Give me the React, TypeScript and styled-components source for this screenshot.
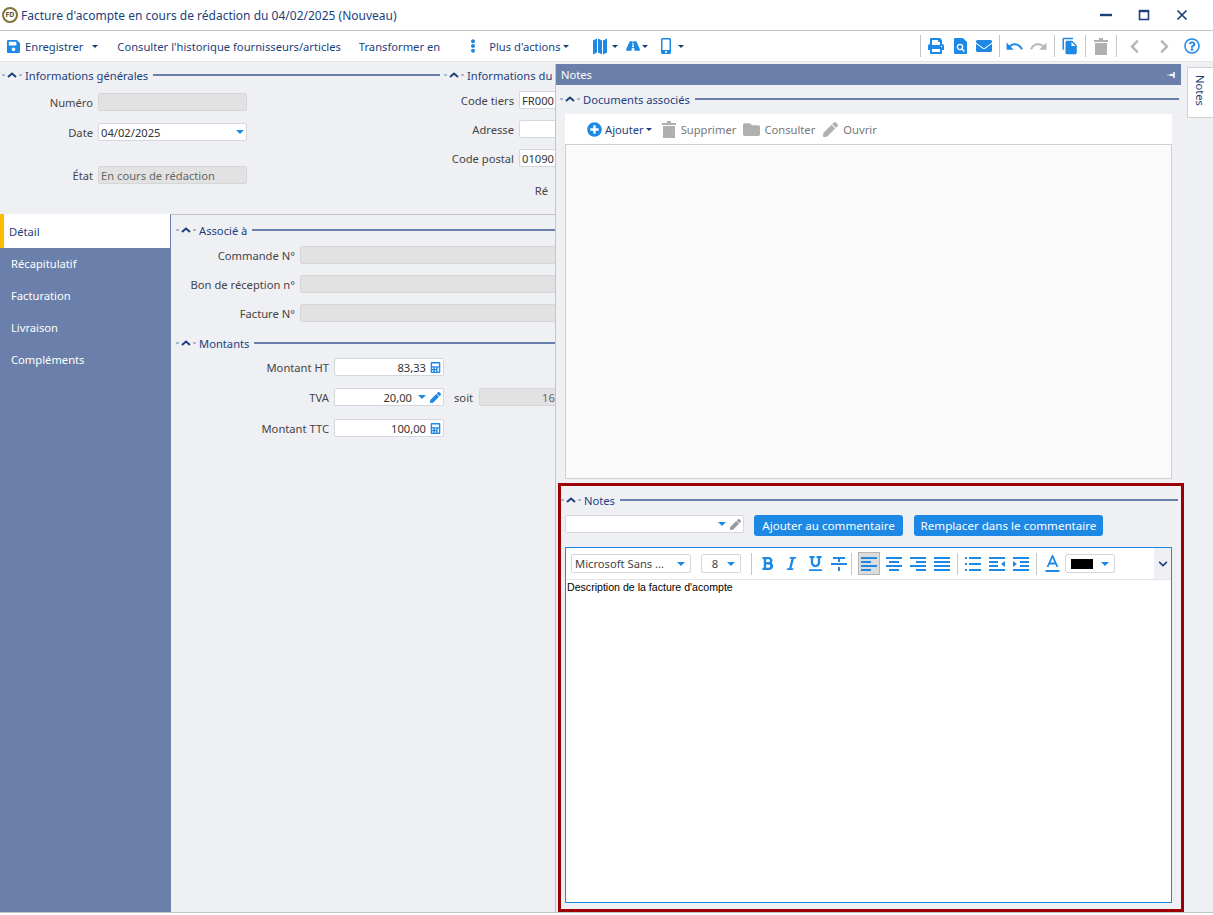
import React from 'react';
import styled, { createGlobalStyle } from 'styled-components';
import {
  FaBold,
  FaCalculator,
  FaChevronDown,
  FaChevronLeft,
  FaChevronRight,
  FaEllipsisV,
  FaEnvelope,
  FaFolder,
  FaItalic,
  FaMobileAlt,
  FaPen,
  FaPlusCircle,
  FaPrint,
  FaRegQuestionCircle,
  FaRoad,
  FaSave,
  FaUnderline,
} from 'react-icons/fa';
import { MdFileCopy, MdRedo, MdUndo } from 'react-icons/md';

const BLUE = '#1e88e5';
const SLATE = '#6a80aa';
const NAVY = '#1c3f7c';
const FONT = '"Noto Sans", "Liberation Sans", sans-serif';

const GlobalStyle = createGlobalStyle`
  html, body {
    margin: 0;
    padding: 0;
    background: #fff;
  }
  * { box-sizing: border-box; }
`;

const Page = styled.div`
  width: 1213px;
  height: 915px;
  padding-bottom: 2px;
  display: flex;
  flex-direction: column;
  overflow: hidden;
  font-family: ${FONT};
  font-size: 11.2px;
  color: #444;
`;

const TitleBar = styled.div`
  height: 31px;
  flex: none;
  display: flex;
  align-items: center;
  padding-left: 2px;
  background: #fff;
  border-bottom: 1px solid #c4c4c4;
  color: ${NAVY};
  font-size: 12px;
`;

const TitleLogo = styled.div`
  width: 16px;
  height: 16px;
  margin-right: 3px;
  border: 2px solid #7d7436;
  border-radius: 50%;
  color: #5d5628;
  font-size: 7px;
  font-weight: 700;
  line-height: 12px;
  text-align: center;
`;

const TitleText = styled.span`
  flex: 1;
`;

const WindowButton = styled.button`
  width: 38px;
  height: 30px;
  padding: 0;
  border: 0;
  background: none;
  display: flex;
  align-items: center;
  justify-content: center;
`;

const Toolbar = styled.div`
  height: 31px;
  flex: none;
  display: flex;
  align-items: center;
  padding: 0 6px;
  background: #fff;
  border-bottom: 1px solid #e3e5ea;
  color: ${NAVY};
`;

const ToolText = styled.span<{ $left?: number; $dark?: boolean }>`
  margin-left: ${(p) => p.$left ?? 0}px;
  white-space: nowrap;
  color: ${(p) => (p.$dark ? NAVY : 'inherit')};
`;

const Caret = styled.i<{ $color?: string; $left?: number; $size?: number }>`
  display: inline-block;
  flex: none;
  width: 0;
  height: 0;
  margin-left: ${(p) => p.$left ?? 2}px;
  border-left: ${(p) => p.$size ?? 3}px solid transparent;
  border-right: ${(p) => p.$size ?? 3}px solid transparent;
  border-top: ${(p) => p.$size ?? 3}px solid ${(p) => p.$color ?? NAVY};
`;

const ToolIcon = styled.span<{ $left?: number; $color?: string; $size?: number }>`
  display: inline-flex;
  flex: none;
  margin-left: ${(p) => p.$left ?? 0}px;
  color: ${(p) => p.$color ?? BLUE};
  font-size: ${(p) => p.$size ?? 15}px;
`;

const ToolDivider = styled.span<{ $left?: number }>`
  flex: none;
  width: 1px;
  height: 22px;
  margin-left: ${(p) => p.$left ?? 6}px;
  background: #c8c8c8;
`;

const Body = styled.div`
  flex: 1;
  min-height: 0;
  display: flex;
  background: #eff0f4;
  border-bottom: 1px solid #c4c4c4;
`;

const LeftPane = styled.div`
  width: 555px;
  flex: none;
  display: flex;
  flex-direction: column;
  overflow: hidden;
`;

const TopForm = styled.div`
  height: 152px;
  flex: none;
  display: flex;
`;

const FormColumn = styled.div<{ $width: number }>`
  width: ${(p) => p.$width}px;
  flex: none;
  padding-right: 2px;
`;

const SectionHeader = styled.div<{ $height?: number; $indent?: number; $top?: number; $right?: number }>`
  height: ${(p) => p.$height ?? 26}px;
  margin-top: ${(p) => p.$top ?? 0}px;
  margin-right: ${(p) => p.$right ?? 0}px;
  display: flex;
  align-items: center;
  padding-left: ${(p) => p.$indent ?? 2}px;
  color: ${NAVY};
  white-space: nowrap;

  &::after {
    content: '';
    flex: 1;
    height: 2px;
    margin-left: 5px;
    background: ${SLATE};
  }
`;

const Collapse = styled.span`
  display: inline-flex;
  align-items: center;
  width: 23px;
  flex: none;
`;

const Row = styled.div<{ $labelWidth: number; $top: number }>`
  display: flex;
  align-items: center;
  height: 18px;
  margin-top: ${(p) => p.$top}px;

  & > label {
    width: ${(p) => p.$labelWidth}px;
    flex: none;
    margin-right: 5px;
    text-align: right;
    white-space: nowrap;
  }
`;

const Field = styled.div<{ $width?: number; $disabled?: boolean; $right?: boolean; $pad?: number }>`
  width: ${(p) => (p.$width ? `${p.$width}px` : 'auto')};
  flex: ${(p) => (p.$width ? 'none' : 1)};
  height: 18px;
  display: flex;
  align-items: center;
  justify-content: ${(p) => (p.$right ? 'flex-end' : 'flex-start')};
  gap: 4px;
  padding: 0 ${(p) => (p.$pad ? 0 : 2)}px 0 ${(p) => p.$pad ?? 2}px;
  overflow: hidden;
  white-space: nowrap;
  border: 1px solid ${(p) => (p.$disabled ? '#d6d6d6' : '#d4d7de')};
  border-radius: 2px;
  background: ${(p) => (p.$disabled ? '#e2e2e2' : '#fff')};
  color: ${(p) => (p.$disabled ? '#666' : '#333')};
`;

const Spacer = styled.span`
  flex: 1;
`;

const TabsArea = styled.div`
  flex: 1;
  min-height: 0;
  display: flex;
`;

const SideNav = styled.nav`
  width: 170px;
  flex: none;
  background: ${SLATE};
`;

const NavItem = styled.div<{ $active?: boolean }>`
  height: ${(p) => (p.$active ? 34 : 32)}px;
  display: flex;
  align-items: center;
  padding-left: ${(p) => (p.$active ? 5 : 11)}px;
  margin-bottom: ${(p) => (p.$active ? -1 : 0)}px;
  border-left: ${(p) => (p.$active ? '4px solid #ffb900' : '0')};
  background: ${(p) => (p.$active ? '#fff' : 'transparent')};
  color: ${(p) => (p.$active ? NAVY : '#fff')};
`;

const DetailPane = styled.div`
  flex: 1;
  padding-right: 2px;
  border-left: 1px solid ${SLATE};
  border-top: 1px solid #c4c4c4;
`;

const NotesPanel = styled.div`
  width: 626px;
  flex: none;
  margin-top: 2px;
  display: flex;
  flex-direction: column;
  border-left: 1px solid #c4c4c4;
`;

const PanelHeader = styled.div`
  height: 21px;
  flex: none;
  display: flex;
  align-items: center;
  justify-content: space-between;
  padding: 0 5px;
  background: ${SLATE};
  color: #fff;
`;

const DocumentsSection = styled.div`
  height: 398px;
  flex: none;
  display: flex;
  flex-direction: column;
  padding: 0 2px 4px 2px;
`;

const DocToolbar = styled.div`
  height: 30px;
  flex: none;
  display: flex;
  align-items: center;
  margin: 1px 7px 0 7px;
  padding-left: 22px;
  background: #fff;
  color: #777;
`;

const DocList = styled.div`
  flex: 1;
  margin: 0 7px;
  background: #fafafa;
  border: 1px solid #d0d0d0;
`;

const NotesSection = styled.section`
  flex: 1;
  min-height: 0;
  margin: 0 -3px 0 2px;
  padding: 0 0 6px 0;
  display: flex;
  flex-direction: column;
  border: 3px solid #9c0006;
`;

const TemplateRow = styled.div`
  flex: none;
  display: flex;
  align-items: flex-start;
  margin: 1px 0 0 4px;
  height: 32px;
`;

const PrimaryButton = styled.button<{ $width: number; $left: number }>`
  width: ${(p) => p.$width}px;
  height: 21px;
  margin-left: ${(p) => p.$left}px;
  padding: 0;
  border: 0;
  border-radius: 3px;
  background: ${BLUE};
  color: #fff;
  font: inherit;
  font-size: 11.6px;
`;

const Editor = styled.div`
  flex: 1;
  min-height: 0;
  display: flex;
  flex-direction: column;
  margin: 0 9px 0 4px;
  border: 1px solid ${BLUE};
  background: #fff;
`;

const EditorToolbar = styled.div`
  height: 31px;
  flex: none;
  display: flex;
  align-items: center;
  padding-left: 5px;
  background: #fff;
`;

const Select = styled.div<{ $width: number; $left?: number }>`
  width: ${(p) => p.$width}px;
  height: 19px;
  flex: none;
  margin-left: ${(p) => p.$left ?? 0}px;
  display: flex;
  align-items: center;
  justify-content: space-between;
  padding: 0 5px 0 3px;
  border: 1px solid #d4d7de;
  border-radius: 2px;
  color: #444;
  white-space: nowrap;
`;

const FormatButton = styled.span<{ $active?: boolean; $left?: number }>`
  width: 22px;
  height: 23px;
  flex: none;
  margin-left: ${(p) => p.$left ?? 2}px;
  display: flex;
  align-items: center;
  justify-content: center;
  color: ${BLUE};
  font-size: 15px;
  background: ${(p) => (p.$active ? '#dcdcdc' : 'transparent')};
  border: 1px solid ${(p) => (p.$active ? '#b5b5b5' : 'transparent')};
`;

const MoreButton = styled.span`
  align-self: stretch;
  width: 17px;
  margin-left: auto;
  display: flex;
  align-items: center;
  justify-content: center;
  background: #eff0f4;
  color: ${NAVY};
  font-size: 10px;
`;

const EditorText = styled.div`
  flex: 1;
  padding: 0 1px;
  border-top: 1px solid #e3e5ea;
  font-family: "Liberation Sans", sans-serif;
  font-size: 10.6px;
  line-height: 14px;
  color: #000;
`;

const ColorSwatch = styled.span`
  width: 22px;
  height: 10px;
  margin-left: 2px;
  background: #000;
`;

const SideStrip = styled.div`
  flex: 1;
  padding: 5px 0 0 6px;
`;

const NotesTab = styled.div`
  width: 26px;
  height: 51px;
  display: flex;
  align-items: center;
  padding-top: 7px;
  background: #fff;
  border: 1px solid #d0d0d0;
  border-right: 0;
  color: ${NAVY};
  writing-mode: vertical-rl;
`;

const CollapseIcon = () => (
  <Collapse>
    <svg width="20" height="8" viewBox="0 0 20 8">
      <path d="M0 4h3M17 4h3" stroke={SLATE} strokeWidth="1" />
      <path d="M6 6l4-3.5L14 6" fill="none" stroke={NAVY} strokeWidth="2" />
    </svg>
  </Collapse>
);

const Section: React.FC<{ title: string; height?: number; indent?: number; top?: number; right?: number }> = ({
  title,
  height,
  indent,
  top,
  right,
}) => (
  <SectionHeader $height={height} $indent={indent} $top={top} $right={right}>
    <CollapseIcon />
    {title}
  </SectionHeader>
);

const MapIcon = () => (
  <svg width="14" height="17" viewBox="0 0 14 17">
    <path d="M0 2.5L4 0.5v14l-4 2zM5 0.5l4 2v14l-4-2zM10 2.5l4-2v14l-4 2z" fill={BLUE} />
  </svg>
);

const TrashIcon: React.FC<{ left: number }> = ({ left }) => (
  <ToolIcon $left={left}>
    <svg width="14" height="17" viewBox="0 0 14 17">
      <path d="M0 2h5V0h4v2h5v2H0zM1 5h12v12H1z" fill="#b0b0b0" />
    </svg>
  </ToolIcon>
);

const Lines: React.FC<{ starts: number[]; ends: number[] }> = ({ starts, ends }) => (
  <svg width="16" height="14" viewBox="0 0 16 14">
    {starts.map((start, i) => (
      <rect key={i} x={start} y={i * 4} width={ends[i] - start} height="2" fill={BLUE} />
    ))}
  </svg>
);

const StrikeIcon = () => (
  <svg width="16" height="14" viewBox="0 0 16 14">
    <path d="M2 0h12v2H9v3H7V2H2zM0 6h16v2H0zM7 10h2v4H7z" fill={BLUE} />
  </svg>
);

const ListIcon = () => (
  <svg width="16" height="14" viewBox="0 0 16 14">
    <path d="M0 0h2v2H0zM4 0h12v2H4zM0 6h2v2H0zM4 6h12v2H4zM0 12h2v2H0zM4 12h12v2H4z" fill={BLUE} />
  </svg>
);

const IndentIcon: React.FC<{ flip?: boolean }> = ({ flip }) => (
  <svg width="16" height="14" viewBox="0 0 16 14" style={flip ? { transform: 'scaleX(-1)' } : undefined}>
    <path d="M0 0h16v2H0zM7 4h9v2H7zM7 8h9v2H7zM0 12h16v2H0zM0 4l4 3-4 3z" fill={BLUE} />
  </svg>
);

const navItems = ['Récapitulatif', 'Facturation', 'Livraison', 'Compléments'];

const App: React.FC = () => (
  <Page>
    <GlobalStyle />
    <TitleBar>
      <TitleLogo>FD</TitleLogo>
      <TitleText>Facture d'acompte en cours de rédaction du 04/02/2025 (Nouveau)</TitleText>
      <WindowButton>
        <svg width="12" height="12" viewBox="0 0 12 12"><path d="M0 6h12" stroke={NAVY} strokeWidth="2.4" /></svg>
      </WindowButton>
      <WindowButton>
        <svg width="12" height="12" viewBox="0 0 12 12"><path d="M1.5 2h9v8.5h-9z" fill="none" stroke={NAVY} strokeWidth="1.6" /><path d="M1 2h10" stroke={NAVY} strokeWidth="2.4" /></svg>
      </WindowButton>
      <WindowButton>
        <svg width="12" height="12" viewBox="0 0 12 12"><path d="M1.5 1.5l9 9M10.5 1.5l-9 9" stroke={NAVY} strokeWidth="1.7" /></svg>
      </WindowButton>
      <ToolText $left={12} />
    </TitleBar>

    <Toolbar>
      <ToolIcon><FaSave /></ToolIcon>
      <ToolText $left={4}>Enregistrer</ToolText>
      <Caret $left={9} />
      <ToolText $left={19}>Consulter l'historique fournisseurs/articles</ToolText>
      <ToolText $left={18}>Transformer en</ToolText>
      <ToolIcon $left={26} $size={14}><FaEllipsisV /></ToolIcon>
      <ToolText $left={9}>Plus d'actions</ToolText>
      <Caret />
      <ToolIcon $left={24}><MapIcon /></ToolIcon>
      <Caret $left={5} />
      <ToolIcon $left={8} $size={14}><FaRoad /></ToolIcon>
      <Caret />
      <ToolIcon $left={10} $size={16}><FaMobileAlt /></ToolIcon>
      <Caret $left={4} />
      <ToolDivider $left={236} />
      <ToolIcon $left={7} $size={16}><FaPrint /></ToolIcon>
      <ToolIcon $left={10}>
        <svg width="13" height="16" viewBox="0 0 13 16">
          <path d="M1 0h8l4 4v11a1 1 0 0 1-1 1H1a1 1 0 0 1-1-1V1a1 1 0 0 1 1-1z" fill={BLUE} />
          <circle cx="6" cy="9" r="2.6" fill="none" stroke="#fff" strokeWidth="1.3" />
          <path d="M8 11l2.4 2.4" stroke="#fff" strokeWidth="1.4" />
        </svg>
      </ToolIcon>
      <ToolIcon $left={9} $size={16}><FaEnvelope /></ToolIcon>
      <ToolDivider $left={7} />
      <ToolIcon $left={5} $size={19}><MdUndo /></ToolIcon>
      <ToolIcon $left={5} $size={19} $color="#b5b5b5"><MdRedo /></ToolIcon>
      <ToolDivider $left={6} />
      <ToolIcon $left={6} $size={18}><MdFileCopy /></ToolIcon>
      <ToolDivider $left={6} />
      <TrashIcon left={8} />
      <ToolDivider $left={8} />
      <ToolIcon $left={10} $size={15} $color="#b5b5b5"><FaChevronLeft /></ToolIcon>
      <ToolIcon $left={15} $size={15} $color="#b5b5b5"><FaChevronRight /></ToolIcon>
      <ToolIcon $left={12} $size={16}><FaRegQuestionCircle /></ToolIcon>
      <ToolIcon $left={13} $size={12} $color="#222"><FaEllipsisV /></ToolIcon>
    </Toolbar>

    <Body>
      <LeftPane>
        <TopForm>
          <FormColumn $width={442}>
            <Section title="Informations générales" />
            <Row $labelWidth={93} $top={5}>
              <label>Numéro</label>
              <Field $width={149} $disabled />
            </Row>
            <Row $labelWidth={93} $top={12}>
              <label>Date</label>
              <Field $width={149}>
                04/02/2025
                <Spacer />
                <Caret $color={BLUE} $size={4} />
              </Field>
            </Row>
            <Row $labelWidth={93} $top={25}>
              <label>État</label>
              <Field $width={149} $disabled>En cours de rédaction</Field>
            </Row>
          </FormColumn>
          <FormColumn $width={113}>
            <Section title="Informations du" />
            <Row $labelWidth={72} $top={3}>
              <label>Code tiers</label>
              <Field $width={120}>FR000</Field>
            </Row>
            <Row $labelWidth={72} $top={11}>
              <label>Adresse</label>
              <Field $width={120} />
            </Row>
            <Row $labelWidth={72} $top={11}>
              <label>Code postal</label>
              <Field $width={120}>01090</Field>
            </Row>
            <Row $labelWidth={106} $top={14}>
              <label>Ré</label>
            </Row>
          </FormColumn>
        </TopForm>

        <TabsArea>
          <SideNav>
            <NavItem $active>Détail</NavItem>
            {navItems.map((item) => (
              <NavItem key={item}>{item}</NavItem>
            ))}
          </SideNav>
          <DetailPane>
            <Section title="Associé à" height={30} indent={5} />
            <Row $labelWidth={124} $top={1}>
              <label>Commande N°</label>
              <Field $disabled />
            </Row>
            <Row $labelWidth={124} $top={11}>
              <label>Bon de réception n°</label>
              <Field $disabled />
            </Row>
            <Row $labelWidth={124} $top={11}>
              <label>Facture N°</label>
              <Field $disabled />
            </Row>
            <Section title="Montants" height={32} indent={5} top={5} />
            <Row $labelWidth={158} $top={-1}>
              <label>Montant HT</label>
              <Field $width={110} $right>
                83,33
                <ToolIcon $size={11}><FaCalculator /></ToolIcon>
              </Field>
            </Row>
            <Row $labelWidth={158} $top={12}>
              <label>TVA</label>
              <Field $width={110} $right>
                20,00
                <Caret $color={BLUE} $size={4} />
                <ToolIcon $size={11}><FaPen /></ToolIcon>
              </Field>
              <ToolText $left={10}>soit</ToolText>
              <ToolText $left={6} />
              <Field $disabled $pad={62}>16</Field>
            </Row>
            <Row $labelWidth={158} $top={13}>
              <label>Montant TTC</label>
              <Field $width={110} $right>
                100,00
                <ToolIcon $size={11}><FaCalculator /></ToolIcon>
              </Field>
            </Row>
          </DetailPane>
        </TabsArea>
      </LeftPane>

      <NotesPanel>
        <PanelHeader>
          Notes
          <svg width="9" height="8" viewBox="0 0 9 8">
            <path d="M0 4h3M3 3.3h3.5v-2h1v5.400h-1v-2H3z" fill="#fff" stroke="#fff" strokeWidth="0.6" />
          </svg>
        </PanelHeader>
        <DocumentsSection>
          <Section title="Documents associés" height={28} />
          <DocToolbar>
            <ToolIcon $size={15}><FaPlusCircle /></ToolIcon>
            <ToolText $left={3} $dark>Ajouter</ToolText>
            <Caret />
            <TrashIcon left={10} />
            <ToolText $left={5}>Supprimer</ToolText>
            <ToolIcon $left={7} $size={17} $color="#b0b0b0"><FaFolder /></ToolIcon>
            <ToolText $left={4}>Consulter</ToolText>
            <ToolIcon $left={8} $size={15} $color="#b0b0b0"><FaPen /></ToolIcon>
            <ToolText $left={5}>Ouvrir</ToolText>
          </DocToolbar>
          <DocList />
        </DocumentsSection>

        <NotesSection>
          <Section title="Notes" height={28} indent={0} right={3} />
          <TemplateRow>
            <Field $width={179}>
              <Spacer />
              <Caret $color={BLUE} $size={4} />
              <ToolIcon $size={11} $color="#999"><FaPen /></ToolIcon>
            </Field>
            <PrimaryButton $width={149} $left={10}>Ajouter au commentaire</PrimaryButton>
            <PrimaryButton $width={189} $left={11}>Remplacer dans le commentaire</PrimaryButton>
          </TemplateRow>
          <Editor>
            <EditorToolbar>
              <Select $width={120}>
                Microsoft Sans ...
                <Caret $color={BLUE} $size={4} />
              </Select>
              <Select $width={40} $left={10}>
                <Spacer />8<Spacer />
                <Caret $color={BLUE} $size={4} />
              </Select>
              <ToolDivider $left={10} />
              <FormatButton $left={4}><FaBold /></FormatButton>
              <FormatButton><FaItalic /></FormatButton>
              <FormatButton><FaUnderline /></FormatButton>
              <FormatButton><StrikeIcon /></FormatButton>
              <ToolDivider $left={1} />
              <FormatButton $left={6} $active><Lines starts={[0, 0, 0, 0]} ends={[16, 10, 16, 10]} /></FormatButton>
              <FormatButton $left={3}><Lines starts={[0, 3, 0, 3]} ends={[16, 13, 16, 13]} /></FormatButton>
              <FormatButton><Lines starts={[0, 6, 0, 6]} ends={[16, 16, 16, 16]} /></FormatButton>
              <FormatButton><Lines starts={[0, 0, 0, 0]} ends={[16, 16, 16, 16]} /></FormatButton>
              <ToolDivider $left={4} />
              <FormatButton $left={4}><ListIcon /></FormatButton>
              <FormatButton><IndentIcon flip /></FormatButton>
              <FormatButton><IndentIcon /></FormatButton>
              <ToolDivider $left={4} />
              <FormatButton $left={4}>
                <svg width="15" height="18" viewBox="0 0 15 18">
                  <path d="M2.500 12L7.500 1l5 11M4.500 8.500h6" fill="none" stroke={BLUE} strokeWidth="1.8" />
                  <path d="M0.500 16h14" stroke={BLUE} strokeWidth="2" />
                </svg>
              </FormatButton>
              <Select $width={50} $left={2}>
                <ColorSwatch />
                <Caret $color={BLUE} $size={4} />
              </Select>
              <MoreButton><FaChevronDown /></MoreButton>
            </EditorToolbar>
            <EditorText>Description de la facture d'acompte</EditorText>
          </Editor>
        </NotesSection>
      </NotesPanel>

      <SideStrip>
        <NotesTab>Notes</NotesTab>
      </SideStrip>
    </Body>
  </Page>
);

export default App;
